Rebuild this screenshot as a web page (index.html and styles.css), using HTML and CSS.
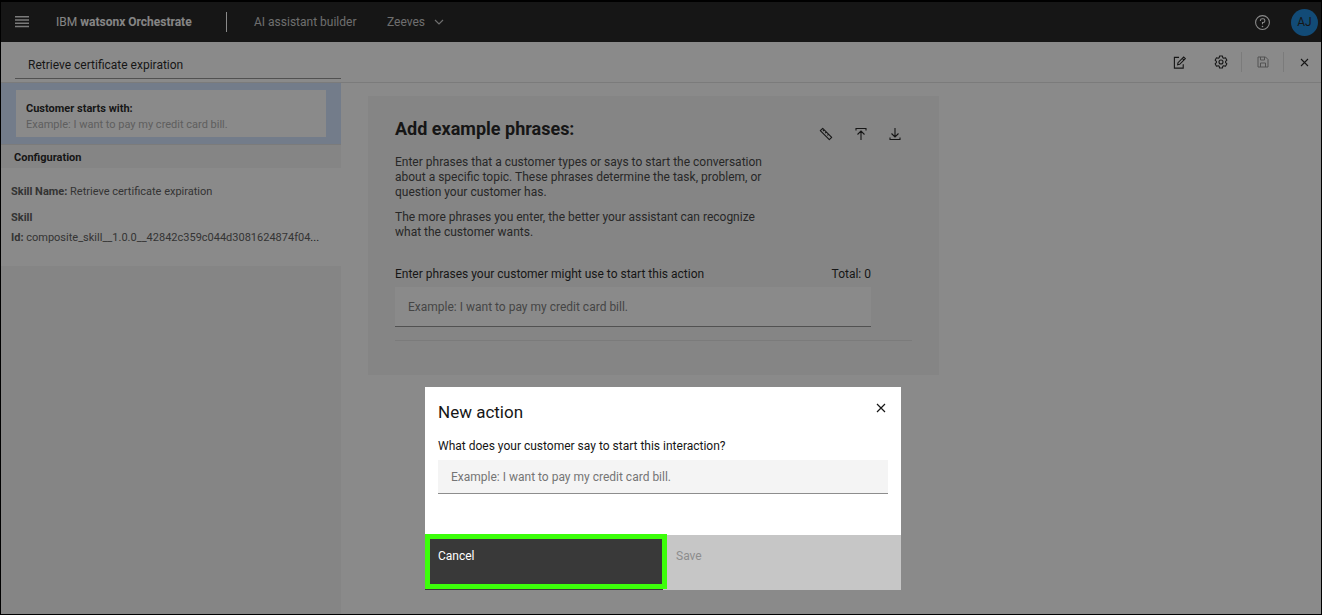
FILE: index.html
```html
<!DOCTYPE html>
<html lang="en">
<head>
<meta charset="utf-8">
<title>AI assistant builder</title>
<link rel="stylesheet" href="styles.css">
</head>
<body>
<div class="app">
  <header class="topbar">
    <button class="icon-btn menu-btn" aria-label="Menu"><svg width="14" height="12" viewBox="0 0 14 12"><path d="M0 .8h14M0 4h14M0 7.200h14M0 10.400h14" stroke="#e0e0e0" stroke-width="1.500"/></svg></button>
    <a class="brand" href="#">IBM <b>watsonx Orchestrate</b></a>
    <span class="brand-divider"></span>
    <a class="product" href="#">AI assistant builder</a>
    <button class="assistant-switch">Zeeves <svg width="10" height="6" viewBox="0 0 10 6"><path d="M1 1l4 4 4-4" fill="none" stroke="currentColor" stroke-width="1.2"/></svg></button>
    <button class="icon-btn help-btn" aria-label="Help"><svg width="17" height="17" viewBox="0 0 32 32" fill="#fff"><path d="M16 2a14 14 0 1 0 14 14A14 14 0 0 0 16 2zm0 26a12 12 0 1 1 12-12 12 12 0 0 1-12 12z"/><circle cx="16" cy="23.5" r="1.5"/><path d="M17 8h-1.500a4.490 4.490 0 0 0-4.500 4.500v.5h2v-.5a2.500 2.500 0 0 1 2.500-2.500H17a2.500 2.500 0 0 1 0 5h-2v4.500h2V17a4.500 4.500 0 0 0 0-9z"/></svg></button>
    <button class="avatar">AJ</button>
  </header>

  <div class="toolbar">
    <input class="action-title" aria-label="Action name" value="Retrieve certificate expiration">
    <div class="tools">
      <button class="icon-btn tool" aria-label="Edit"><svg width="13" height="13" viewBox="0 0 14 14" fill="none" stroke="#161616" stroke-width="1.200"><path d="M6.500 1.500h-5v11.500H11V9"/><path d="M5 9.500l.4-2.300L11.500 1l1.800 1.800L7.200 9z"/><path d="M10 2.500l1.800 1.800"/></svg></button>
      <button class="icon-btn tool" aria-label="Settings"><svg width="14" height="14" viewBox="0 0 14 14" fill="none" stroke="#161616" stroke-width="1.100" stroke-linejoin="round"><path d="M5.600 1h2.800l.4 1.700 1 .6 1.700-.5 1.400 2.400L11.600 6.400v1.200l1.300 1.200-1.400 2.400-1.700-.5-1 .6-.4 1.700H5.600l-.4-1.700-1-.6-1.700.5-1.400-2.400 1.300-1.200V6.400L1.100 5.200l1.400-2.400 1.700.5 1-.6z"/><circle cx="7" cy="7" r="2"/></svg></button>
      <button class="icon-btn tool ruled" aria-label="Save action" disabled><svg width="12" height="12" viewBox="0 0 12 12" fill="none" stroke="#8d8d8d"><path d="M1 1h7.500L11 3.500V11H1zM3.500 1v3h4V1M3.500 11V7h5v4"/></svg></button>
      <button class="icon-btn tool close" aria-label="Close editor"><svg width="9" height="9" viewBox="0 0 9 9"><path d="M1 1l7 7M8 1L1 8" stroke="#161616" stroke-width="1.100"/></svg></button>
    </div>
  </div>

  <div class="workspace">
    <aside class="sidebar">
      <div class="step-wrap">
        <button class="step"><b>Customer starts with:</b><span>Example: I want to pay my credit card bill.</span></button>
      </div>
      <h2 class="config-title">Configuration</h2>
      <div class="config">
        <p><b>Skill Name:</b> Retrieve certificate expiration</p>
        <p class="skill-id"><b>Skill<br>Id:</b> composite_skill__1.0.0__42842c359c044d3081624874f04<i>...</i></p>
      </div>
    </aside>
    <main class="content">
      <section class="card">
        <div class="card-head">
          <h1>Add example phrases:</h1>
          <div class="card-tools">
            <button class="icon-btn" aria-label="Annotate"><svg width="14" height="14" viewBox="0 0 14 14" fill="none" stroke="#161616" stroke-width="1.100" stroke-linejoin="round"><path d="M1.300 3.700L3.700 1.300l9 9-2.400 2.400zM5.200 2.800L4 4M7.400 5L6.200 6.200M9.600 7.200L8.400 8.400"/></svg></button>
            <button class="icon-btn" aria-label="Upload"><svg width="12" height="14" viewBox="0 0 12 14" fill="none" stroke="#161616" stroke-width="1.100"><path d="M1 3.500v-2h10v2M6 13V4M2.500 7.500L6 4l3.500 3.500"/></svg></button>
            <button class="icon-btn" aria-label="Download"><svg width="12" height="14" viewBox="0 0 12 14" fill="none" stroke="#161616" stroke-width="1.100"><path d="M1 10.500v2h10v-2M6 1v9M2.500 6.500L6 10l3.500-3.500"/></svg></button>
          </div>
        </div>
        <p>Enter phrases that a customer types or says to start the conversation<br>about a specific topic. These phrases determine the task, problem, or<br>question your customer has.</p>
        <p>The more phrases you enter, the better your assistant can recognize<br>what the customer wants.</p>
        <div class="phrase-form">
          <div class="label-row"><label for="phrase">Enter phrases your customer might use to start this action</label><span>Total: 0</span></div>
          <input id="phrase" class="field" placeholder="Example: I want to pay my credit card bill.">
        </div>
        <hr>
      </section>
    </main>
  </div>

  <div class="overlay">
    <div class="modal" role="dialog" aria-labelledby="modal-title">
      <div class="modal-head">
        <h2 id="modal-title">New action</h2>
        <button class="icon-btn" aria-label="Close"><svg width="10" height="10" viewBox="0 0 10 10"><path d="M1 1l8 8M9 1L1 9" stroke="#161616" stroke-width="1.200"/></svg></button>
      </div>
      <div class="modal-body">
        <label for="start">What does your customer say to start this interaction?</label>
        <input id="start" class="field" placeholder="Example: I want to pay my credit card bill.">
      </div>
      <div class="modal-foot">
        <button class="cancel">Cancel</button>
        <button class="save" disabled>Save</button>
      </div>
    </div>
  </div>
</div>
</body>
</html>
```
FILE: styles.css
```css
* { box-sizing: border-box; }
body, h1, h2, p { margin: 0; }
body, button, input { font-family: Roboto, "Noto Sans", sans-serif; font-size: 12px; color: #161616; }
button { border: 0; padding: 0; background: none; text-align: left; }
input { border: 0; border-radius: 0; outline: 0; }
svg { display: block; }
a { color: inherit; text-decoration: none; }

.app {
  position: relative;
  display: flex;
  flex-direction: column;
  min-height: 100vh;
  border: 1px solid #000;
  border-top-width: 2px;
  background: #fff;
}
.icon-btn { display: flex; align-items: center; justify-content: center; }

.topbar { display: flex; align-items: center; height: 40px; padding: 0 3px 0 14px; background: #161616; color: #f4f4f4; }
.menu-btn { width: 14px; }
.brand { width: 142px; margin-left: 27px; white-space: nowrap; }
.brand-divider { width: 1px; height: 20px; margin: 0 27px 0 28px; background: #fff; }
.product { width: 104px; color: #c6c6c6; white-space: nowrap; }
.assistant-switch { display: flex; align-items: center; gap: 9px; margin-left: 29px; color: #c6c6c6; }
.help-btn { margin-left: auto; }
.avatar { width: 27px; height: 27px; margin-left: 20px; border-radius: 50%; background: #0f80d8; text-align: center; }

.toolbar { display: flex; justify-content: space-between; align-items: center; height: 41px; border-bottom: 1px solid #e0e0e0; }
.action-title { width: 326px; height: 28px; margin: 5px 0 0 14px; padding: 2px 13px 0; border-bottom: 1px solid #8d8d8d; background: #fff; }
.tools { display: flex; align-items: center; }
.tool { width: 41px; height: 20px; }
.tool.ruled { width: 43px; border: solid #e0e0e0; border-width: 0 1px; }
.tool.close { width: 37px; padding-left: 4px; }

.workspace { flex: 1; display: flex; }
.sidebar { flex: 0 0 340px; background: #f4f4f4; font-size: 11px; }
.step-wrap { padding: 7px 15px; background: #d0e2ff; }
.step { display: flex; flex-direction: column; justify-content: center; gap: 3px; width: 100%; height: 47px; padding: 5px 10px 0; background: #fff; font-size: 11px; }
.step span { color: #a8a8a8; }
.config-title { height: 24px; padding-left: 13px; border-top: 1px solid #e0e0e0; font-size: 11px; line-height: 25px; }
.config { height: 98px; padding: 14px 10px 0; background: #fff; color: #525252; line-height: 20px; }
.config p + p { margin-top: 6px; }
.config i { color: #161616; font-style: normal; }
.skill-id { white-space: nowrap; }

.content { flex: 1; padding: 13px 27px; }
.card { width: 571px; padding: 20px 27px 34px; background: #f4f4f4; color: #393939; }
.card-head { display: flex; justify-content: space-between; align-items: center; height: 25px; margin-bottom: 14px; padding-right: 11px; }
.card h1 { color: #161616; font-size: 18px; line-height: 25px; }
.card-tools { display: flex; gap: 22px; padding-top: 10px; }
.card p { margin-bottom: 10px; line-height: 15px; white-space: nowrap; }
.phrase-form { width: 476px; margin-top: 25px; color: #161616; }
.label-row { display: flex; justify-content: space-between; line-height: 18px; margin-bottom: 4px; }
.field { display: block; width: 100%; height: 40px; padding: 0 13px; border-bottom: 1px solid #8d8d8d; background: #fff; }
.field::placeholder { color: #757575; opacity: 1; }
.card hr { margin: 13px 0 0; border: 0; border-top: 1px solid #e0e0e0; }

.overlay { position: absolute; inset: 0; display: flex; align-items: flex-end; justify-content: center; padding: 0 0 24px 4px; background: rgba(22, 22, 22, 0.5); }
.modal { width: 476px; background: #fff; }
.modal-head { display: flex; justify-content: space-between; padding: 13px 15px 0 13px; }
.modal-head h2 { font-size: 17px; font-weight: 400; line-height: 24px; }
.modal-head .icon-btn { height: 16px; }
.modal-body { padding: 13px 13px 41px; }
.modal-body label { display: block; margin-bottom: 5px; line-height: 18px; }
.modal-body .field { height: 34px; background: #f4f4f4; }
.modal-foot { display: grid; grid-template-columns: 1fr 1fr; height: 55px; }
.modal-foot button { padding: 0 13px 14px; }
.cancel { position: relative; background: #393939; color: #fff; }
.cancel::after { content: ""; position: absolute; inset: -1px -4px 1px 0; border: 5px solid #3cff0a; }
.save { background: #c6c6c6; color: #8d8d8d; }
```
